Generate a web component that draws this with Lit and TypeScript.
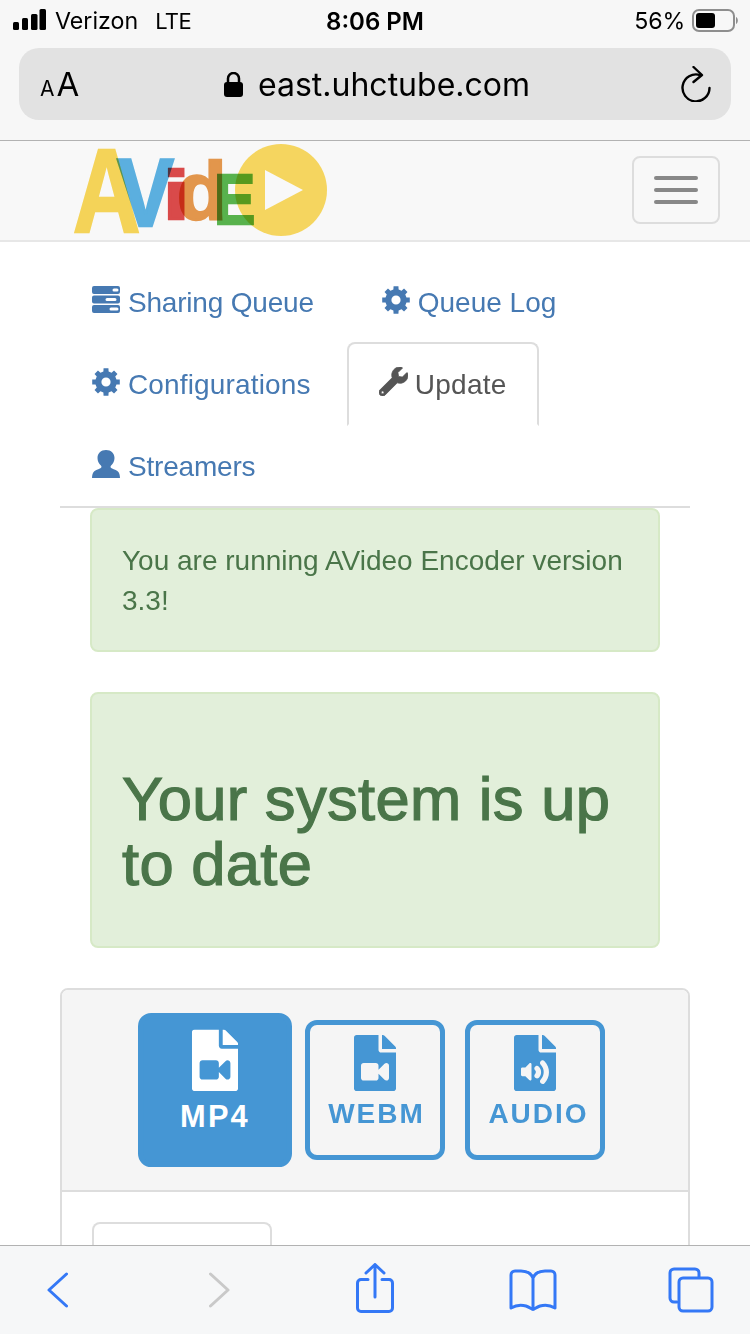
import { LitElement, html, css, svg } from "lit";
import { customElement } from "lit/decorators.js";

const FILE = "M224 136V0H24C10.7 0 0 10.7 0 24v464c0 13.3 10.7 24 24 24h336c13.3 0 24-10.7 24-24V160H248c-13.2 0-24-10.8-24-24z";
const FOLD = "M384 121.9v6.1H256V0h6.1c6.4 0 12.5 2.5 17 7l97.9 97.9c4.5 4.5 7 10.6 7 17z";
const VIDEO = "M320 280v112c0 21.4-25.9 32-41 17l-55-55v38c0 13.3-10.7 24-24 24H88c-13.3 0-24-10.7-24-24V280c0-13.3 10.7-24 24-24h112c13.3 0 24 10.7 24 24v38l55-55c15-15 41-4.500 41 17z";
const AUDIO = "M160 404c0 10.700-12.900 16-20.500 8.500L104 376H76c-6.600 0-12-5.400-12-12v-56c0-6.600 5.400-12 12-12h28l35.500-36.500c7.600-7.600 20.500-2.200 20.500 8.500v136zm33.200-47.600c9.100-9.300 9.100-24.100 0-33.400-22.100-22.800 12.200-56.200 34.400-33.500 27.200 27.900 27.200 72.400 0 100.400-21.800 22.300-56.900-10.400-34.400-33.500zm86-117.100c54.400 55.900 54.400 144.800 0 200.800-21.800 22.400-57-10.300-34.400-33.500 36.200-37.200 36.300-96.500 0-133.800-22.100-22.800 12.300-56.300 34.400-33.500z";
const WRENCH = "M507.730 109.100c-2.240-9.030-13.540-12.090-20.120-5.510l-74.360 74.360-67.880-11.310-11.310-67.880 74.360-74.360c6.620-6.620 3.430-17.900-5.660-20.160-47.380-11.740-99.550.91-136.580 37.930-39.640 39.640-50.550 97.100-34.050 147.200L18.740 402.760c-24.990 24.990-24.990 65.510 0 90.500 24.990 24.990 65.510 24.990 90.500 0l213.210-213.210c50.120 16.710 107.470 5.680 147.370-34.220 37.070-37.070 49.700-89.320 37.910-136.730zM64 472c-13.250 0-24-10.750-24-24 0-13.260 10.750-24 24-24s24 10.740 24 24c0 13.250-10.750 24-24 24z";

function gearPath(teeth: number, R: number, r: number, hole: number, c: number) {
  const pt = (rad: number, deg: number) => {
    const a = (deg * Math.PI) / 180;
    return `${(c + rad * Math.sin(a)).toFixed(2)} ${(c - rad * Math.cos(a)).toFixed(2)}`;
  };
  const step = 360 / teeth;
  let d = "";
  for (let k = 0; k < teeth; k++) {
    const m = k * step;
    d += `${k === 0 ? "M" : "L"}${pt(r, m - 14)}L${pt(R, m - 10)}L${pt(R, m + 10)}L${pt(r, m + 14)}`;
  }
  d += `ZM${c - hole} ${c}a${hole} ${hole} 0 1 0 ${hole * 2} 0a${hole} ${hole} 0 1 0 ${-hole * 2} 0Z`;
  return d;
}
const COG = gearPath(8, 14, 10.8, 4.6, 14);

@customElement("app-root")
export class AppRoot extends LitElement {
  static styles = css`
    :host { display: block; width: 750px; height: 1334px; overflow: hidden; position: relative; background: #fff;
      font-family: "Liberation Sans", Arial, sans-serif; color: #555; }
    * { box-sizing: border-box; }
    svg { display: block; flex: none; }

    .chrome { height: 141px; background: #f7f7f7; border-bottom: 1px solid #b2b2b2; font-family: Inter, "Liberation Sans", sans-serif; color: #000; }
    .status { height: 48px; display: flex; align-items: center; padding: 0 12px 6px 13px; font-size: 23.200px; position: relative; }
    .signal { margin-top: -3px; }
    .carrier { margin-left: 9px; }
    .lte { margin-left: 17px; font-size: 22px; letter-spacing: -.6px; }
    .clock { position: absolute; left: 0; right: 0; top: 0; height: 42px; display: flex; align-items: center; justify-content: center; font-weight: 600; font-size: 24px; }
    .batt { margin-left: auto; display: flex; align-items: center; gap: 7px; }
    .batt span { letter-spacing: -.2px; }
    .url { margin: 0 19px; height: 72px; border-radius: 20px; background: #e2e2e2; display: flex; align-items: center; padding: 0 20px 0 21px; }
    .aa { display: flex; align-items: baseline; font-size: 33px; line-height: 1; width: 38px; }
    .aa small { font-size: 21px; margin-right: 2px; }
    .host { margin-left: 146px; display: flex; align-items: center; gap: 15px; font-size: 32px; }
    .reload { margin-left: auto; }

    .navbar { height: 101px; background: #f8f8f8; border-bottom: 2px solid #e7e7e7; display: flex; align-items: flex-start; justify-content: space-between; padding-right: 30px; }
    .logo { margin-left: 70px; }
    .logo text { font-family: "Liberation Sans", sans-serif; font-weight: 700; mix-blend-mode: multiply; stroke-width: 2.500px; }
    .toggle { margin-top: 15px; width: 88px; height: 68px; border: 2px solid #ddd; border-radius: 8px; padding: 18px 20px; display: flex; flex-direction: column; gap: 8px; }
    .toggle i { display: block; height: 4px; border-radius: 2px; background: #888; }

    .main { padding: 18px 60px 0; }
    .tabs { display: flex; flex-wrap: wrap; border-bottom: 2px solid #ddd; margin: 0; padding: 0; list-style: none; }
    .tabs li { margin-bottom: -2px; height: 84px; margin-right: 4px; border: 2px solid transparent; border-radius: 8px 8px 0 0; padding: 21px 30px 19px; display: flex; align-items: center; gap: 8px; font-size: 28px; line-height: 40px; color: #4679b2; white-space: nowrap; }
    .tabs li svg { margin-bottom: 7px; }
    .tabs .brk { flex-basis: 100%; height: 0; padding: 0; margin: 0; border: 0; }
    .tabs li.active { color: #555; border-color: #ddd; border-bottom-color: #fff; background: #fff; gap: 7px; letter-spacing: .3px; }
    .sp-n { letter-spacing: -.2px; }
    .sp-w { letter-spacing: .15px; }
    .sp-s { letter-spacing: -.2px; }
    .ic { fill: currentColor; }
    .thick { stroke: currentColor; stroke-width: 14; }

    .alert { margin: 0 30px 40px; padding: 31px 30px 29px; border: 2px solid #d6e9c6; border-radius: 8px; background: #e2efda; color: #4a7549; font-size: 28px; line-height: 40px; }
    .big { padding: 30px; }
    .alert h2 { margin: 42px 0 20px; font-size: 61.500px; line-height: 65px; letter-spacing: .3px; font-weight: 400; -webkit-text-stroke: 1.200px #4a7549; }

    .panel { border: 2px solid #ddd; border-radius: 8px; height: 400px; }
    .head { height: 202px; background: #f5f5f5; border-bottom: 2px solid #ddd; border-radius: 6px 6px 0 0; padding: 30px 0; display: flex; justify-content: center; gap: 20px; }
    .fmt { width: 140px; height: 140px; border: 5px solid #4596d4; border-radius: 12px; color: #4596d4; display: flex; flex-direction: column; align-items: center; padding-top: 10px; font-weight: 700; font-size: 28px; letter-spacing: 2px; line-height: 32px; }
    .fmt span { margin: 7px 0 0 3px; }
    .fmt.au span { margin-left: 7px; }
    .fmt.on { background: #4596d4; color: #fff; transform: scale(1.1); }
    .fmt.on span { margin: 8px 0 0 0; }
    .body { padding: 30px; }
    .subtab { width: 180px; height: 100px; border: 2px solid #ddd; border-bottom: 0; border-radius: 8px 8px 0 0; }

    .bar { position: absolute; left: 0; right: 0; bottom: 0; height: 89px; background: #f6f7f8; border-top: 1px solid #b2b2b2; display: flex; align-items: flex-start; padding-left: 47px; }
    .bar svg { fill: none; stroke-linecap: round; stroke-linejoin: round; stroke-width: 3; stroke: #3478f6; }
    .bar svg.off { stroke: #c9c9c9; }
    .b1 { margin-top: 25px; }
    .b2 { margin: 25px 0 0 141px; }
    .b3 { margin: 17px 0 0 126px; }
    .b4 { margin: 23px 0 0 115px; }
    .b5 { margin: 21px 0 0 111px; }
  `;

  private fileIcon(w: number, h: number, inner: string) {
    return html`<svg class="ic" width=${w} height=${h} viewBox="0 0 384 512"><path d=${FILE + inner}></path><path d=${FOLD}></path></svg>`;
  }

  private logo() {
    const t = (s: string, x: number, y: number, sx: number, fs: number, fill: string) =>
      svg`<text transform="translate(${x} ${y}) scale(${sx} 1)" font-size=${fs} fill=${fill} stroke=${fill}>${s}</text>`;
    return html`<svg class="logo" width="260" height="100" viewBox="70 141 260 100">
      <circle cx="281" cy="190" r="46" fill="#f5d55f"></circle>
      <path d="M265 170L303 190L265 210Z" fill="#f8f8f8"></path>
      ${t("A", 73, 232, .79, 118, "#fbd95a")}
      ${t("V", 117, 226, .88, 97, "#5db4e6")}
      ${t("i", 163, 219, 1.4, 68, "#e04c4c")}
      ${t("d", 177, 219, 1.0, 81, "#e99a4e")}
      ${t("E", 214, 224, .87, 71, "#5ab74f")}
    </svg>`;
  }

  render() {
    return html`
      <div class="chrome">
        <div class="status">
          <svg class="signal" width="33" height="21" viewBox="0 0 33 21" fill="#000">
            <rect x="0" y="13" width="6" height="8" rx="1.500"></rect>
            <rect x="9" y="9" width="6" height="12" rx="1.500"></rect>
            <rect x="18" y="5" width="6.500" height="16" rx="1.500"></rect>
            <rect x="26.500" y="0" width="6.500" height="21" rx="1.500"></rect>
          </svg>
          <span class="carrier">Verizon</span><span class="lte">LTE</span>
          <div class="clock">8:06 PM</div>
          <div class="batt">
            <span>56%</span>
            <svg width="46" height="24" viewBox="0 0 46 24">
              <rect x="1" y="1" width="41" height="21" rx="6" fill="none" stroke="#8e8e8e" stroke-width="2"></rect>
              <rect x="4" y="4" width="19" height="15" rx="3" fill="#000"></rect>
              <path d="M44 8c1.100.4 1.800 1.800 1.800 3.500s-.7 3.100-1.800 3.500z" fill="#8e8e8e"></path>
            </svg>
          </div>
        </div>
        <div class="url">
          <div class="aa"><small>A</small>A</div>
          <div class="host">
            <svg width="19" height="25" viewBox="0 0 19 25"><path d="M4 11V6.500a5.500 5.500 0 0 1 11 0V11" fill="none" stroke="#000" stroke-width="2.500"></path><rect x="0" y="10" width="19" height="15" rx="3"></rect></svg>
            <span>east.uhctube.com</span>
          </div>
          <svg class="reload" width="30" height="36" viewBox="0 0 30 36" fill="none" stroke="#000" stroke-width="2.400" stroke-linecap="round" stroke-linejoin="round">
            <path d="M19 9a13.500 13.500 0 1 0 9.500 13"></path><path d="M12.500 1l8.500 8-8.500 7"></path>
          </svg>
        </div>
      </div>
      <div class="navbar">
        ${this.logo()}
        <div class="toggle"><i></i><i></i><i></i></div>
      </div>
      <div class="main">
        <ul class="tabs">
          <li class="sp-n"><svg class="ic" width="28" height="27" viewBox="0 0 28 27"><path fill-rule="evenodd" d="M2 0h24a2 2 0 0 1 2 2v4a2 2 0 0 1-2 2H2a2 2 0 0 1-2-2V2a2 2 0 0 1 2-2zM22 2.500a1.500 1.500 0 0 0 0 3h3a1.500 1.500 0 0 0 0-3zM2 9.500h24a2 2 0 0 1 2 2v4a2 2 0 0 1-2 2H2a2 2 0 0 1-2-2v-4a2 2 0 0 1 2-2zM15 12a1.500 1.500 0 0 0 0 3h8a1.500 1.500 0 0 0 0-3zM2 19h24a2 2 0 0 1 2 2v4a2 2 0 0 1-2 2H2a2 2 0 0 1-2-2v-4a2 2 0 0 1 2-2zM19 21.500a1.500 1.500 0 0 0 0 3h6a1.500 1.500 0 0 0 0-3z"></path></svg>Sharing Queue</li>
          <li><svg class="ic" width="28" height="28" viewBox="0 0 28 28"><path fill-rule="evenodd" d=${COG}></path></svg>Queue Log</li>
          <li class="brk"></li>
          <li class="sp-w"><svg class="ic" width="28" height="28" viewBox="0 0 28 28"><path fill-rule="evenodd" d=${COG}></path></svg>Configurations</li>
          <li class="active"><svg class="ic thick" width="29" height="29" viewBox="0 0 512 512"><path d=${WRENCH}></path></svg>Update</li>
          <li class="brk"></li>
          <li class="sp-s"><svg class="ic" width="28" height="28" viewBox="0 0 28 28"><path d="M14 0c5.200 0 8.500 3.400 8.500 8 0 3-1.400 5.600-3.400 7.400-.9 1-.7 2.200.5 2.800 2.800 1.300 5.800 2 7 4 .7 1.300 1.400 3 1.400 5.800H0c0-2.800.7-4.500 1.400-5.800 1.200-2 4.200-2.700 7-4 1.200-.6 1.400-1.800.5-2.800C6.900 13.600 5.500 11 5.500 8 5.500 3.400 8.800 0 14 0z"></path></svg>Streamers</li>
        </ul>
        <div class="alert">You are running AVideo Encoder version 3.3!</div>
        <div class="alert big"><h2>Your system is up to date</h2></div>
        <div class="panel">
          <div class="head">
            <div class="fmt on">${this.fileIcon(42, 56, VIDEO)}<span>MP4</span></div>
            <div class="fmt">${this.fileIcon(42, 56, VIDEO)}<span>WEBM</span></div>
            <div class="fmt au">${this.fileIcon(42, 56, AUDIO)}<span>AUDIO</span></div>
          </div>
          <div class="body"><div class="subtab"></div></div>
        </div>
      </div>
      <div class="bar">
        <svg class="b1" width="21" height="38" viewBox="0 0 21 38"><path d="M19.500 3L2 19l17.500 16"></path></svg>
        <svg class="b2 off" width="21" height="38" viewBox="0 0 21 38"><path d="M1.500 3L19 19 1.500 35"></path></svg>
        <svg class="b3" width="38" height="50" viewBox="0 0 38 50"><path d="M19 34V2M10 10l9-8.500 9 8.500M12 16.500H5a3.500 3.500 0 0 0-3.500 3.500v25A3.500 3.500 0 0 0 5 48.500h28a3.500 3.500 0 0 0 3.500-3.500V20a3.500 3.500 0 0 0-3.500-3.500h-7"></path></svg>
        <svg class="b4" width="48" height="42" viewBox="0 0 48 42"><path d="M24 9v31M24 9C22 4 18 2 12 2H6a4 4 0 0 0-4 4v33c5-3 10-3.500 15-2 3 1 5 2.500 7 3.500 2-1 4-2.500 7-3.500 5-1.500 10-1 15 2V6a4 4 0 0 0-4-4h-6c-6 0-10 2-12 7z"></path></svg>
        <svg class="b5" width="46" height="46" viewBox="0 0 46 46"><path d="M9 35H6a4 4 0 0 1-4-4V6a4 4 0 0 1 4-4h21a4 4 0 0 1 4 4v4"></path><rect x="11" y="11" width="33" height="33" rx="4"></rect></svg>
      </div>
    `;
  }
}
